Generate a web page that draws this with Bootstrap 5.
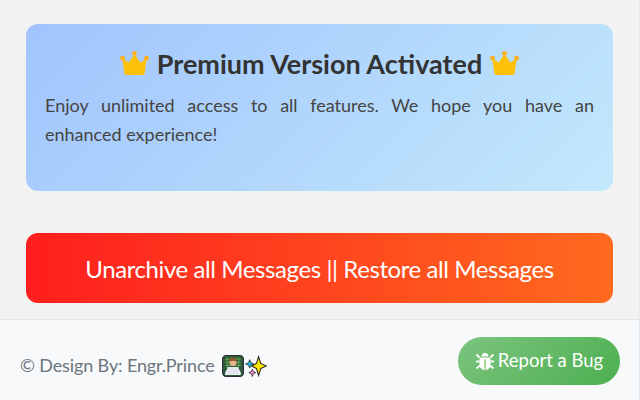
<!DOCTYPE html>
<html lang="en">
<head>
<meta charset="utf-8">
<title>Premium</title>
<link href="https://cdn.jsdelivr.net/npm/bootstrap@5.3.0/dist/css/bootstrap.min.css" rel="stylesheet">
<style>
html,body{height:400px;overflow:hidden}
body{background:#f2f2f2;font-family:Lato,"Noto Sans","Liberation Sans",sans-serif;color:#333}
.page-wrap{height:400px;border-right:1px solid #e4eaee}
.main-area{padding:24px 26px 0 26px;height:319px}
.promo-box{height:167px;border-radius:12px;background:linear-gradient(135deg,#a1c4fd,#c2e9fb);padding:22px 19px 0;margin-bottom:42px}
.promo-title{font-size:27px;font-weight:700;line-height:36px;color:#333;margin:0 0 9px;gap:8px}
.crown-icon{margin-top:-2px}
.promo-text{font-size:18px;line-height:29px;color:#444;margin:0;text-align:justify}
.restore-btn{height:70px;width:100%;border:0;border-radius:12px;background:linear-gradient(90deg,#ff1e1e,#ff6a1e);color:#fff;font-size:24px;letter-spacing:-.41px;padding-top:8px}
.foot-bar{height:81px;background:#f8f9fa;border-top:1px solid #e5e5e5;padding:0 19px 0 20px}
.foot-text{font-size:18px;letter-spacing:-.13px;color:#6c757d;gap:7px;padding-top:11px}
.bug-btn{width:162px;height:48px;border-radius:24px;border:0;background:linear-gradient(135deg,#7cc47f,#4caf50);color:#fff;font-size:18.5px;gap:3px;padding:0;margin-top:1px}
.spark-icon{margin-left:-6px}
</style>
</head>
<body>
<div class="page-wrap d-flex flex-column">
  <main class="main-area">
    <section class="promo-box">
      <h1 class="promo-title d-flex justify-content-center align-items-center">
        <svg class="crown-icon" width="29" height="26" viewBox="0 0 30 26" aria-hidden="true"><path fill="#ffc107" d="M4.500 23.500 L2.400 8.500 L9.200 12.500 L15 3.500 L20.800 12.500 L27.600 8.500 L25.500 23.500 Q25.300 25.500 23.500 25.500 L6.500 25.500 Q4.700 25.500 4.500 23.500Z"/><circle cx="2.600" cy="8" r="2.500" fill="#ffb020"/><circle cx="15" cy="3" r="2.500" fill="#ffb020"/><circle cx="27.400" cy="8" r="2.500" fill="#ffb020"/></svg>
        <span>Premium Version Activated</span>
        <svg class="crown-icon" width="29" height="26" viewBox="0 0 30 26" aria-hidden="true"><path fill="#ffc107" d="M4.500 23.500 L2.400 8.500 L9.200 12.500 L15 3.500 L20.800 12.500 L27.600 8.500 L25.500 23.500 Q25.300 25.500 23.500 25.500 L6.500 25.500 Q4.700 25.500 4.500 23.500Z"/><circle cx="2.600" cy="8" r="2.500" fill="#ffb020"/><circle cx="15" cy="3" r="2.500" fill="#ffb020"/><circle cx="27.400" cy="8" r="2.500" fill="#ffb020"/></svg>
      </h1>
      <p class="promo-text">Enjoy unlimited access to all features. We hope you have an enhanced experience!</p>
    </section>
    <button type="button" class="btn restore-btn">Unarchive all Messages || Restore all Messages</button>
  </main>
  <footer class="foot-bar d-flex justify-content-between align-items-center">
    <div class="foot-text d-flex align-items-center">
      <span>© Design By: Engr.Prince</span>
      <svg width="22" height="22" viewBox="0 0 21 21" aria-hidden="true"><rect x=".5" y=".5" width="20" height="20" rx="3.500" fill="#2d5a3a" stroke="#2b2b3a"/><path d="M3 4h15M3 7h15M3 10h15M5 2v10M9 2v4M13 2v4M16 2v10" stroke="#6ab050" stroke-width=".8"/><circle cx="10.500" cy="7" r="3.500" fill="#e8b48a"/><path d="M7 6.500q0-4 3.500-4t3.500 4q-3.500-2-7 0z" fill="#8a5a2b"/><path d="M3 19q0-7 7.500-7t7.500 7z" fill="#eef2f6"/><rect x="5" y="11.500" width="11" height="7" rx="1" fill="#e3e8ee"/></svg>
      <svg class="spark-icon" width="22" height="22" viewBox="0 0 21 21" aria-hidden="true"><path fill="#ffe600" stroke="#222" stroke-width="1" d="M13 1.500 L15 8 L20.500 10.500 L15 13 L13 19.500 L11 13 L6.500 10.500 L11 8Z"/><path fill="#20b0e8" stroke="#222" stroke-width=".7" d="M4.500 4.500 L5.700 7.300 L8.500 8.500 L5.700 9.700 L4.500 12.500 L3.300 9.700 L.5 8.500 L3.300 7.300Z"/><path fill="#f08ad0" stroke="#222" stroke-width=".7" d="M7 13.500 L8 15.800 L10.300 16.800 L8 17.800 L7 20.500 L6 17.800 L3.700 16.800 L6 15.800Z"/></svg>
    </div>
    <button type="button" class="btn bug-btn d-flex align-items-center justify-content-center">
      <svg width="20" height="20" viewBox="0 0 20 20" aria-hidden="true"><g fill="#fff"><path d="M6.500 5.500a3.500 3.500 0 0 1 7 0z"/><path d="M5.500 6.500h9q1 0 1 1.500v5.500a5.500 5.500 0 0 1-11 0V8q0-1.500 1-1.500z"/></g><path d="M1.500 3.500l3 3M18.500 3.500l-3 3M1 10.500h3.500M19 10.500h-3.500M1.500 17.500l3.500-3M18.500 17.500l-3.500-3" stroke="#fff" stroke-width="1.800" fill="none"/><path d="M10 8.500v10" stroke="#8cc66a" stroke-width="1.400"/></svg>
      <span>Report a Bug</span>
    </button>
  </footer>
</div>
</body>
</html>
